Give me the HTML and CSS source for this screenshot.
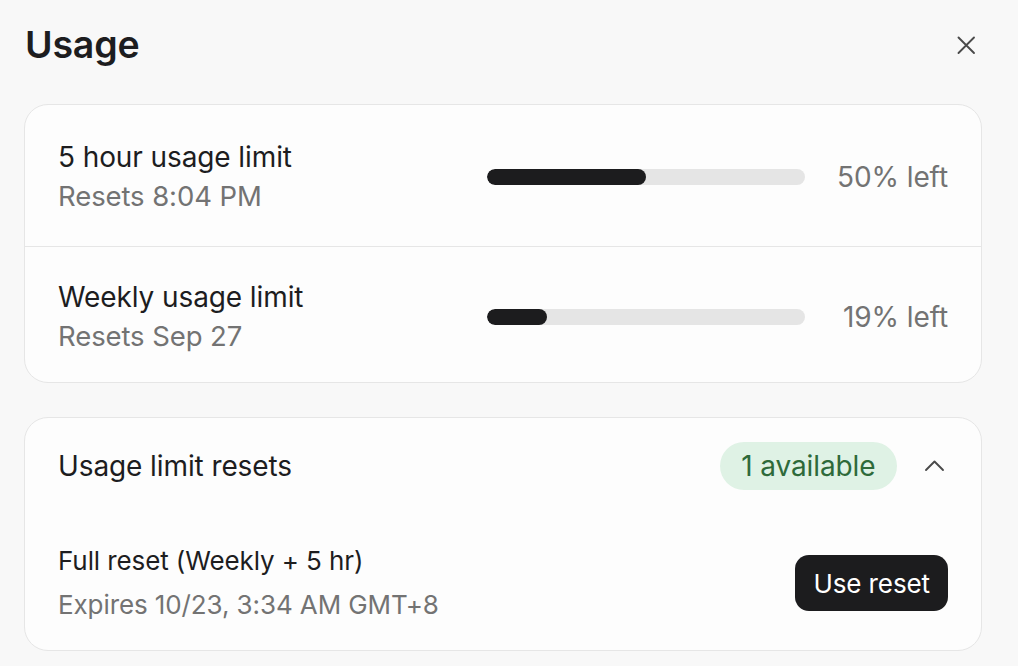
FILE: index.html
```html
<!DOCTYPE html>
<html lang="en">
<head>
<meta charset="utf-8">
<title>Usage</title>
<link rel="stylesheet" href="styles.css">
</head>
<body>
<div class="panel">
  <header class="head">
    <h1 class="title">Usage</h1>
    <button class="close" aria-label="Close">
      <svg width="24" height="24" viewBox="0 0 24 24" fill="none" stroke="#4a4a4a" stroke-width="1.9" stroke-linecap="round"><path d="M4.5 4.5 L20 20 M20 4.5 L4.5 20"/></svg>
    </button>
  </header>

  <section class="card">
    <div class="limit">
      <div class="info">
        <div class="name">5 hour usage limit</div>
        <div class="sub">Resets 8:04 PM</div>
      </div>
      <div class="meter">
        <div class="track"><div class="fill" style="width:50%"></div></div>
        <div class="left">50% left</div>
      </div>
    </div>
    <div class="limit">
      <div class="info">
        <div class="name">Weekly usage limit</div>
        <div class="sub">Resets Sep 27</div>
      </div>
      <div class="meter">
        <div class="track"><div class="fill" style="width:19%"></div></div>
        <div class="left">19% left</div>
      </div>
    </div>
  </section>

  <section class="card resets">
    <div class="resets-head">
      <div class="name">Usage limit resets</div>
      <div class="actions">
        <span class="badge">1 available</span>
        <svg class="chev" width="24" height="24" viewBox="0 0 24 24" fill="none" stroke="#4a4a4a" stroke-width="1.9" stroke-linecap="round" stroke-linejoin="round"><path d="M4 16 L12.5 7.5 L21 16"/></svg>
      </div>
    </div>
    <div class="reset-item">
      <div class="info">
        <div class="item-name">Full reset (Weekly + 5 hr)</div>
        <div class="item-sub">Expires 10/23, 3:34 AM GMT+8</div>
      </div>
      <button class="use">Use reset</button>
    </div>
  </section>
</div>
</body>
</html>
```

FILE: styles.css
```css
* { box-sizing: border-box; }
html, body { margin: 0; padding: 0; }
body {
  background: #f8f8f8;
  font-family: Inter, "Noto Sans", "Liberation Sans", sans-serif;
  color: #1d1d1f;
  width: 1018px;
  height: 666px;
  overflow: hidden;
}
.panel {
  padding: 25px 36px 0 24px;
  display: flex;
  flex-direction: column;
}
.head {
  display: flex;
  align-items: center;
  justify-content: space-between;
  height: 40px;
  margin-bottom: 39px;
}
.title {
  margin: 0 0 0 1px;
  font-size: 37.5px;
  line-height: 40px;
  font-weight: 600;
  letter-spacing: -0.2px;
}
.close {
  background: none;
  border: 0;
  padding: 0;
  width: 24px;
  height: 24px;
  margin-right: 4px;
  display: flex;
}
.card {
  background: #fdfdfd;
  border: 1px solid #e6e6e6;
  border-radius: 24px;
}
.limit {
  display: flex;
  align-items: center;
  justify-content: space-between;
  padding: 35px 33px 33px;
}
.limit + .limit {
  border-top: 1px solid #e6e6e6;
  padding: 33px 33px 29px;
}
.info { display: flex; flex-direction: column; gap: 5px; }
.name { font-size: 28px; line-height: 34px; letter-spacing: -0.1px; }
.sub { font-size: 27.5px; line-height: 34px; color: #737373; letter-spacing: -0.1px; }
.meter { display: flex; align-items: center; }
.track {
  width: 318px;
  height: 16px;
  border-radius: 8px;
  background: #e5e5e5;
  overflow: hidden;
}
.fill { height: 100%; background: #1c1c1e; border-radius: 8px; }
.left {
  width: 143px;
  text-align: right;
  font-size: 28px;
  color: #737373;
  letter-spacing: -0.1px;
}
.resets {
  margin-top: 34px;
  padding: 24px 33px 29px;
}
.resets-head {
  display: flex;
  align-items: center;
  justify-content: space-between;
  height: 48px;
}
.actions { display: flex; align-items: center; gap: 25px; }
.badge {
  background: #dff2e5;
  color: #2e6a3a;
  font-size: 28px;
  line-height: 48px;
  height: 48px;
  padding: 0 21.5px;
  border-radius: 24px;
  letter-spacing: -0.1px;
}
.chev { margin-right: 2px; }
.reset-item {
  margin-top: 55px;
  display: flex;
  align-items: center;
  justify-content: space-between;
}
.reset-item .info { gap: 12px; }
.item-name { font-size: 26px; line-height: 32px; letter-spacing: -0.1px; }
.item-sub { font-size: 26px; line-height: 32px; color: #737373; letter-spacing: -0.1px; }
.use {
  background: #1c1c1e;
  color: #fff;
  border: 0;
  border-radius: 14px;
  height: 56px;
  padding: 0 18px;
  font-family: inherit;
  font-size: 26px;
  letter-spacing: -0.1px;
}
```
